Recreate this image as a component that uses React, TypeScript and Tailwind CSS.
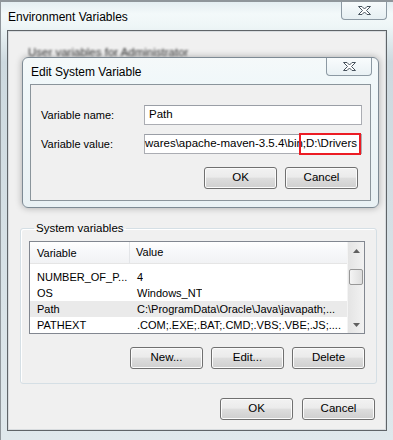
const btn =
  "flex h-[22px] w-[73px] items-center justify-center rounded-[3px] border border-[#707070] bg-[linear-gradient(180deg,#f2f2f2_0%,#ebebeb_45%,#dddddd_52%,#cfcfcf_100%)] shadow-[inset_0_0_0_1px_#fbfbfb] text-[11.5px] text-black";

const rows = [
  ["NUMBER_OF_P...", "4"],
  ["OS", "Windows_NT"],
  ["Path", "C:\\ProgramData\\Oracle\\Java\\javapath;..."],
  ["PATHEXT", ".COM;.EXE;.BAT;.CMD;.VBS;.VBE;.JS;...."],
];

function CloseGlyph() {
  return (
    <svg width="15" height="11" viewBox="0 0 15 11">
      <polygon
        points="1.5,1.5 5,1.5 7.5,4 10,1.5 13.5,1.5 9.5,5.5 13.5,9.5 10,9.5 7.5,7 5,9.5 1.5,9.5 5.5,5.5"
        fill="#ffffff"
        stroke="#47535d"
        strokeWidth="1"
        strokeLinejoin="round"
      />
    </svg>
  );
}

function Arrow({ up }: { up?: boolean }) {
  return (
    <div className="flex h-[17px] items-center justify-center">
      <svg width="7" height="4" viewBox="0 0 7 4">
        <polygon points={up ? "0,4 7,4 3.5,0" : "0,0 7,0 3.5,4"} fill="#606060" />
      </svg>
    </div>
  );
}

export default function App() {
  return (
    <div className="relative flex h-[440px] w-[393px] flex-col overflow-hidden border-t-[2px] border-l border-[#8f969b] bg-[linear-gradient(180deg,#e4eef2_0px,#f3f9fa_12px,#eef6f7_24px,#cdd9df_60px,#dfe8ec_100%)] font-['Liberation_Sans',Arial,sans-serif] text-black">
      {/* title bar */}
      <div className="flex h-[28px] items-start">
        <span className="pl-[7px] pt-[7px] text-[12px] leading-[16px]">Environment Variables</span>
        <div className="mr-[6px] ml-auto flex h-[18px] w-[46px] items-center justify-center rounded-b-[4px] border border-t-0 border-[#8c99a3] bg-[linear-gradient(180deg,#f7fbfc,#e6eff2)]">
          <CloseGlyph />
        </div>
      </div>

      {/* client area of Environment Variables */}
      <div className="mx-[6px] flex h-[401px] flex-col border border-[#5f6468] bg-[#f0f0f0] shadow-[inset_0_0_0_1px_#d8dcdf]">
        <div className="h-[189px] pl-[20px] pt-[13px] leading-[14px]">
          <span className="text-[11.5px] text-[#333] blur-[0.8px]">User variables for Administrator</span>
        </div>

        <fieldset className="mr-[9px] ml-[12px] rounded-[3px] border border-[#d5dfe5] pr-[11px] pb-[14px] pl-[8px] shadow-[inset_1px_1px_0_#ffffff]">
          <legend className="ml-[5px] px-[2px] text-[11.5px] leading-[16px]">System variables</legend>
          <div className="mt-[5px] flex h-[93px] border border-[#828790] bg-white">
            <div className="flex min-w-0 flex-1 flex-col text-[11px]">
              <div className="flex h-[22px] shrink-0 items-center border-b border-[#e5e5e5] bg-[linear-gradient(180deg,#ffffff_0%,#f7f8fa_45%,#f1f2f4_100%)]">
                <div className="w-[100px] border-r border-[#e3e5e8] pl-[7px] leading-[22px]">Variable</div>
                <div className="pl-[6px]">Value</div>
              </div>
              <div className="mt-[5px] flex flex-col">
                {rows.map(([name, value]) => (
                  <div
                    key={name}
                    className={`flex h-[16px] shrink-0 items-center whitespace-nowrap ${name === "Path" ? "bg-[#eaeaea]" : ""}`}
                  >
                    <div className="w-[100px] overflow-hidden pl-[7px]">{name}</div>
                    <div className="overflow-hidden pl-[7px]">{value}</div>
                  </div>
                ))}
              </div>
            </div>
            <div className="flex w-[17px] shrink-0 flex-col border-l border-[#f4f4f4] bg-[linear-gradient(90deg,#e4e4e4,#f2f2f2)]">
              <Arrow up />
              <div className="flex-1 pt-[10px]">
                <div className="mx-[1px] h-[16px] rounded-[2px] border border-[#979797] bg-[linear-gradient(90deg,#f4f4f4,#dedede)]" />
              </div>
              <Arrow />
            </div>
          </div>
          <div className="mt-[13px] flex justify-end gap-[8px]">
            <button className={btn}>New...</button>
            <button className={btn}>Edit...</button>
            <button className={btn}>Delete</button>
          </div>
        </fieldset>

        <div className="mt-[14px] flex justify-end gap-[9px] pr-[11px]">
          <button className={btn}>OK</button>
          <button className={btn}>Cancel</button>
        </div>
      </div>

      {/* Edit System Variable dialog on top */}
      <div className="absolute top-[55px] left-[21px] flex h-[151px] w-[357px] flex-col rounded-[6px] border border-[#7d8a94] bg-[linear-gradient(180deg,rgba(246,251,252,0.8)_0px,rgba(240,248,250,0.95)_26px,#e9f1f4_100%)] shadow-[0_0_7px_rgba(0,0,0,0.3)]">
        <div className="flex h-[26px] shrink-0 items-start">
          <span className="pl-[8px] pt-[6px] text-[12px] leading-[16px]">Edit System Variable</span>
          <div className="mr-[6px] ml-auto flex h-[18px] w-[46px] items-center justify-center rounded-b-[4px] border border-t-0 border-[#8c99a3] bg-[linear-gradient(180deg,#f9fcfd,#e9f1f4)]">
            <CloseGlyph />
          </div>
        </div>
        <div className="mx-[7px] flex h-[117px] flex-col border border-[#8a949b] bg-[#f0f0f0] pt-[20px] pr-[8px] pl-[10px] text-[11px]">
          <div className="flex h-[20px] items-center">
            <span className="w-[103px]">Variable name:</span>
            <div className="flex h-[20px] w-[218px] items-center border border-[#abadb3] border-t-[#9a9ea6] bg-white pl-[4px] text-[11.5px]">Path</div>
          </div>
          <div className="mt-[9px] flex h-[20px] items-center">
            <span className="w-[103px]">Variable value:</span>
            <div className="relative flex h-[20px] w-[218px] items-center justify-end border border-[#abadb3] border-t-[#9a9ea6] bg-white pr-[4px] text-[11.5px] whitespace-nowrap">
              <span>wares\apache-maven-3.5.4\bin</span>
              <span className="-ml-[3px] inline-block h-[13px] w-[1px] bg-black" />
              <span className="ml-[2px]">;D:\Drivers</span>
              <div className="absolute top-[-2px] right-[0px] h-[22px] w-[62px] border-2 border-[#ec1c24]" />
            </div>
          </div>
          <div className="mt-[13px] flex justify-end gap-[8px] pr-[4px]">
            <button className={btn}>OK</button>
            <button className={btn}>Cancel</button>
          </div>
        </div>
      </div>
    </div>
  );
}
